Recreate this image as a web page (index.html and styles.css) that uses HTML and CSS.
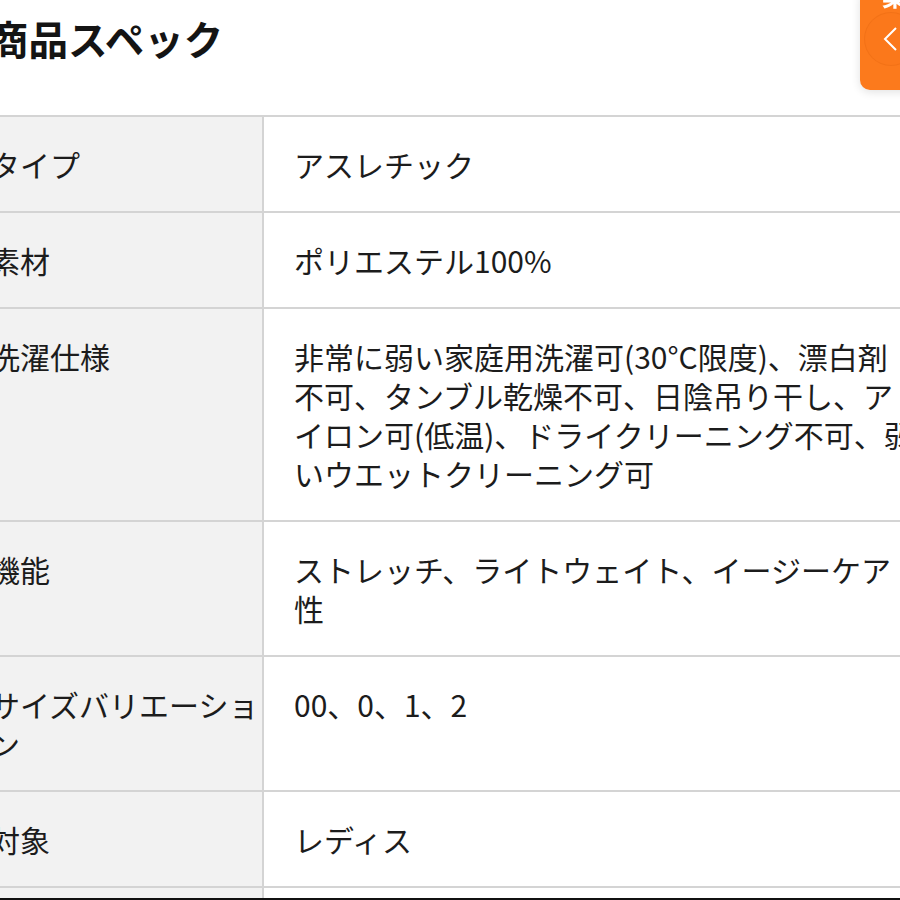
FILE: index.html
```html
<!DOCTYPE html>
<html lang="ja">
<head>
<meta charset="utf-8">
<title>商品スペック</title>
<link rel="stylesheet" href="styles.css">
</head>
<body>
<div class="page">
  <h1 class="title">商品スペック</h1>
  <table class="spec">
    <tr><th>タイプ</th><td>アスレチック</td></tr>
    <tr><th>素材</th><td>ポリエステル100%</td></tr>
    <tr><th>洗濯仕様</th><td>非常に弱い家庭用洗濯可(30°C限度)、漂白剤<br>不可、タンブル乾燥不可、日陰吊り干し、ア<br>イロン可(低温)、ドライクリーニング不可、弱<br>いウエットクリーニング可</td></tr>
    <tr><th>機能</th><td>ストレッチ、ライトウェイト、イージーケア<br>性</td></tr>
    <tr><th>サイズバリエーション</th><td>00、0、1、2</td></tr>
    <tr><th>対象</th><td>レディス</td></tr>
    <tr><th>&nbsp;</th><td>&nbsp;</td></tr>
  </table>
</div>
<div class="float-btn">
  <span class="float-label">案</span>
  <span class="float-circle">
    <svg width="20" height="26" viewBox="0 0 20 26"><path d="M14 2 L3 13 L14 24" fill="none" stroke="#fff" stroke-width="2"/></svg>
  </span>
</div>
<div class="bottom-bar"></div>
</body>
</html>
```
FILE: styles.css
```css
html, body {
  margin: 0;
  padding: 0;
  background: #fff;
  overflow: hidden;
  height: 900px;
}
body {
  font-family: "Noto Sans CJK JP", "Noto Sans", sans-serif;
  color: #1c1c1c;
}
.page {
  margin-left: -10px;
}
.title {
  margin: 11px 0 0 -1px;
  padding-bottom: 51px;
  font-size: 39.5px;
  line-height: 53px;
  font-weight: 700;
  color: #141414;
}
.spec {
  border-collapse: collapse;
  width: 1100px;
  font-size: 30px;
  line-height: 39px;
}
.spec th,
.spec td {
  border-top: 2px solid #d4d4d4;
  border-bottom: 2px solid #d4d4d4;
  vertical-align: top;
  text-align: left;
  font-weight: 400;
  padding: 28px 0 27px;
}
.spec th {
  width: 272px;
  background: #f2f2f2;
  border-right: 2px solid #d4d4d4;
  padding-right: 0;
}
.spec td {
  padding-left: 30px;
  white-space: nowrap;
  background: #fff;
}
.float-btn {
  position: fixed;
  top: -12px;
  left: 860px;
  width: 70px;
  height: 102px;
  border-radius: 10px;
  background: #fc7a1c;
  box-shadow: 0 2px 10px rgba(0, 0, 0, 0.12);
}
.float-label {
  position: absolute;
  top: -8px;
  left: 22px;
  color: #fff;
  font-size: 26px;
  font-weight: 700;
  line-height: 30px;
}
.float-circle {
  position: absolute;
  top: 25px;
  left: 5px;
  width: 52px;
  height: 52px;
  border-radius: 50%;
  background: #fb781b;
  box-shadow: 0 0 0 1px rgba(200, 80, 0, 0.18);
  display: flex;
  align-items: center;
  justify-content: center;
}
.float-circle svg {
  margin-left: 2px;
}
.bottom-bar {
  position: fixed;
  left: 0;
  bottom: 0;
  width: 100%;
  height: 2px;
  background: #111;
}
```
